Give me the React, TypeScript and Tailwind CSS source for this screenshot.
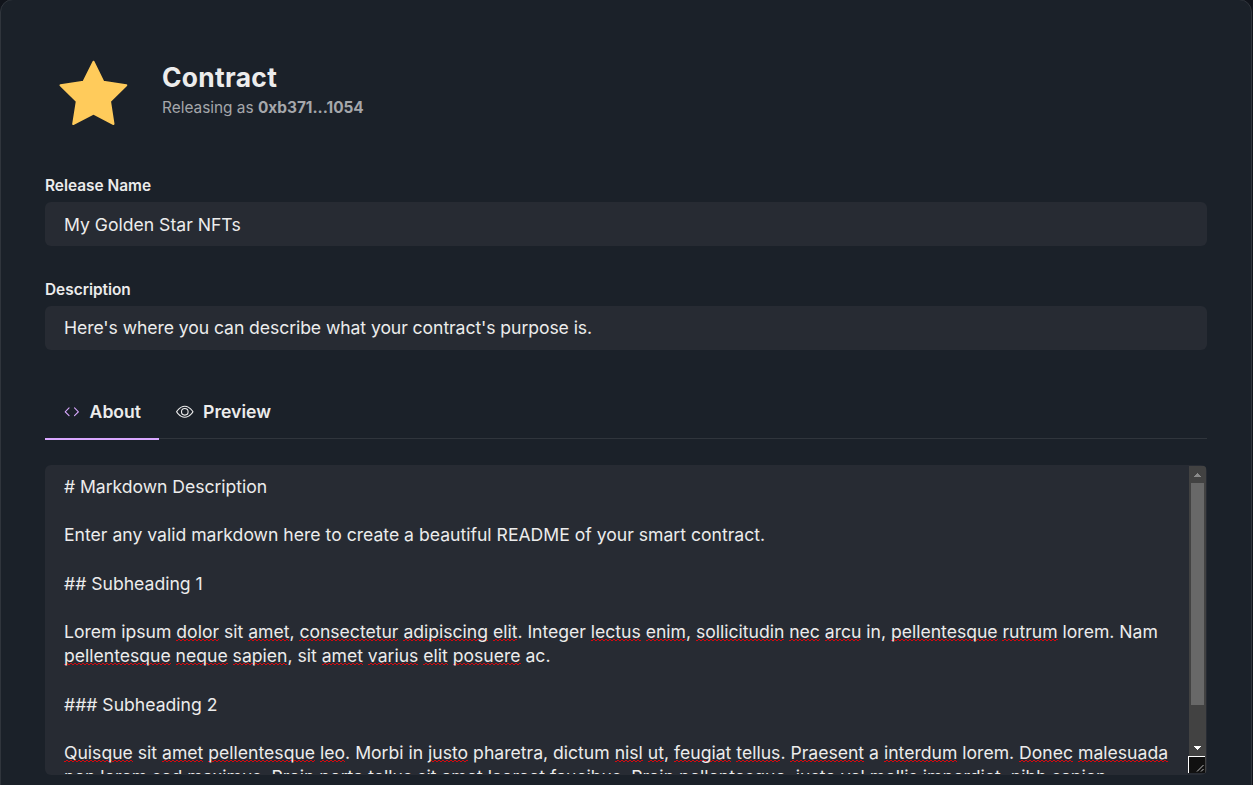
import type { ReactNode } from "react";
import { BsCode, BsEye } from "react-icons/bs";

function M({ children }: { children: ReactNode }) {
  return (
    <span className="bg-[image:repeating-linear-gradient(90deg,#d40a10_0_2px,transparent_2px_4px),repeating-linear-gradient(90deg,transparent_0_2px,#d40a10_2px_4px)] bg-[length:100%_1px,100%_1px] bg-[position:0_calc(100%_-_1px),0_calc(100%_-_2px)] bg-no-repeat">
      {children}
    </span>
  );
}

function Field({ label, value, className }: { label: string; value: string; className: string }) {
  return (
    <div className="flex flex-col">
      <label className="mb-[5px] pt-px text-[15.4px] leading-[22px] font-semibold">{label}</label>
      <div className={`flex h-11 items-center rounded-[6px] bg-[#272b33] px-[19px] text-[17.6px] ${className}`}>{value}</div>
    </div>
  );
}

function Star() {
  return (
    <svg className="h-[66px] w-[69px]" viewBox="0 0 69 66" fill="#ffcb5b" stroke="#ffcb5b" strokeWidth="2" strokeLinejoin="round">
      <path d="M34.5 1.7 44.3 21.7 67.3 25.3 51 41.2 54.5 64 34.5 53.5 14.2 64 17.8 41.2 1.5 25.3 24.5 21.7Z" />
    </svg>
  );
}

function Scrollbar() {
  return (
    <div className="mt-px mr-px flex h-[307px] w-[17px] shrink-0 flex-col bg-[#424242]">
      <svg className="h-[17px] w-[17px]" viewBox="0 0 17 17" shapeRendering="crispEdges">
        <path d="M5 11h7v-1h-1v-1h-1v-1h-1v-1h-1v1h-1v1h-1v1h-1z" fill="#8a8a8a" />
      </svg>
      <div className="ml-[2px] h-[222px] w-[13px] bg-[#686868]" />
      <div className="flex-1" />
      <svg className="h-[17px] w-[17px]" viewBox="0 0 17 17" shapeRendering="crispEdges">
        <path d="M5 7h7v1h-1v1h-1v1h-1v1h-1v-1h-1v-1h-1v-1h-1z" fill="#fff" />
      </svg>
      <svg className="-ml-px h-[17px] w-[17px]" viewBox="0 0 17 17">
        <path d="M0 0h17v17H0z" fill="#111" />
        <path d="M0 0h17v1H1v16H0z" fill="#fff" />
        <path d="M9 15.5 15.5 9M13 15.5l2.5-2.5" stroke="#bbb" fill="none" />
      </svg>
    </div>
  );
}

export default function App() {
  return (
    <div className="h-[785px] w-[1253px] overflow-hidden bg-[#11141b] font-[Inter,sans-serif] text-[#ececec]">
      <div className="-mt-px flex h-[820px] w-[1252px] flex-col rounded-[13px] border border-[#30353c] bg-[#1b2129] px-11 pt-[60px]">
        <header className="flex h-[66px] gap-[34px] pl-[14px]">
          <Star />
          <div className="flex flex-col">
            <h1 className="pt-px text-[26.4px] leading-[33px] font-bold tracking-[0.3px]">Contract</h1>
            <p className="mt-[3px] text-[15.4px] leading-[22px] text-[#a5a7ab]">
              Releasing as <b className="font-bold">0xb371...1054</b>
            </p>
          </div>
        </header>
        <div className="mt-[48px] flex w-[1162px] flex-col gap-8">
          <Field label="Release Name" value="My Golden Star NFTs" className="pt-[2px]" />
          <Field
            label="Description"
            value="Here's where you can describe what your contract's purpose is."
            className="tracking-[-0.075px]"
          />
        </div>
        <nav className="mt-[35px] flex h-[54px] w-[1162px] border-b border-[#30353c] text-[17.6px] font-semibold">
          <div className="-mb-px flex h-[55px] w-[114px] items-center gap-[9px] border-b-2 border-[#d9a8ff] pl-[18px]">
            <BsCode className="text-[#d9a8ff]" />
            <span className="pt-[2px]">About</span>
          </div>
          <div className="flex h-[53px] items-center gap-[9.5px] pl-[17px]">
            <BsEye />
            <span className="pt-[2px]">Preview</span>
          </div>
        </nav>
        <div className="mt-[26px] flex h-[310px] w-[1162px] shrink-0 overflow-hidden rounded-[6px] bg-[#272b33]">
          <div className="my-px h-[308px] flex-1 overflow-hidden pt-[9px] pl-[19px] text-[17.6px] leading-[24.2px] whitespace-pre">
            <p className="tracking-[-0.04px]"># Markdown Description</p>
            <br />
            <p>Enter any valid markdown here to create a beautiful README of your smart contract.</p>
            <br />
            <p>## Subheading 1</p>
            <br />
            <p className="tracking-[-0.016px]">
              Lorem ipsum <M>dolor</M> sit <M>amet</M>, <M>consectetur</M> <M>adipiscing</M> <M>elit</M>. Integer <M>lectus</M> <M>enim</M>, <M>sollicitudin</M> <M>nec</M> <M>arcu</M> in, <M>pellentesque</M> <M>rutrum</M> lorem. Nam
            </p>
            <p className="tracking-[-0.01px]">
              <M>pellentesque</M> <M>neque</M> <M>sapien</M>, sit <M>amet</M> <M>varius</M> <M>elit</M> <M>posuere</M> ac.
            </p>
            <br />
            <p>### Subheading 2</p>
            <br />
            <p>
              <M>Quisque</M> sit <M>amet</M> <M>pellentesque</M> <M>leo</M>. Morbi in <M>justo</M> pharetra, dictum <M>nisl</M> <M>ut</M>, <M>feugiat</M> <M>tellus</M>. <M>Praesent</M> a <M>interdum</M> lorem. <M>Donec</M> <M>malesuada</M>
            </p>
            <p>non lorem sed maximus. Proin porta tellus sit amet laoreet faucibus. Proin pellentesque, justo vel mollis imperdiet, nibh sapien</p>
          </div>
          <Scrollbar />
        </div>
      </div>
    </div>
  );
}
